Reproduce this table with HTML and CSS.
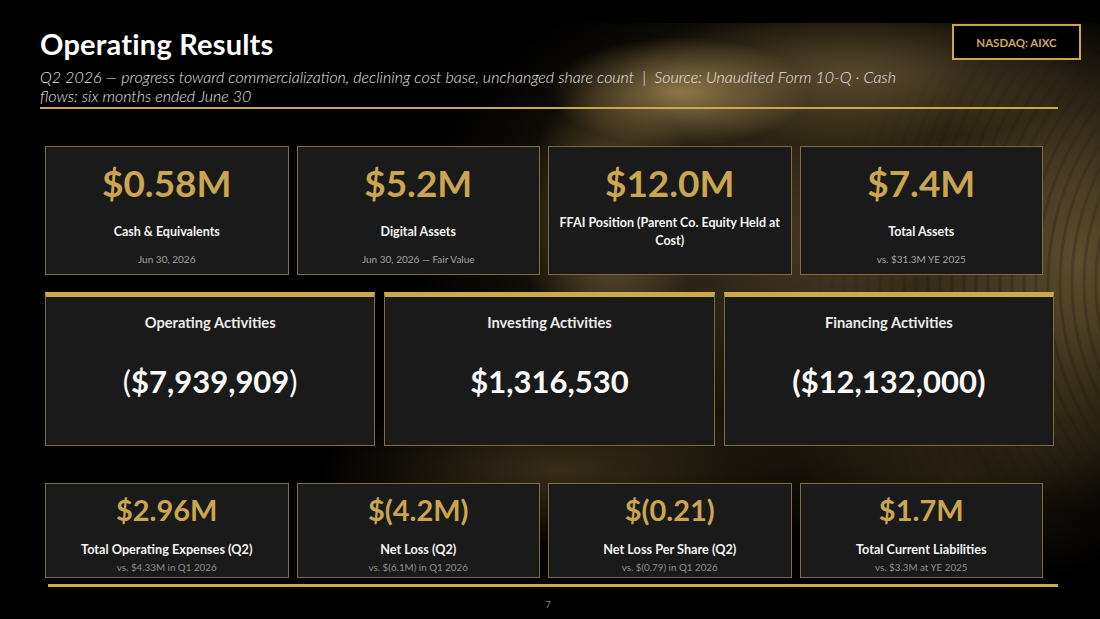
FILE: index.html
```html
<!DOCTYPE html>
<html lang="en">
<head>
<meta charset="utf-8">
<title>Operating Results</title>
<link rel="stylesheet" href="styles.css">
</head>
<body>
<div class="slide">
  <header class="header">
    <div class="heading">
      <h1 class="title">Operating Results</h1>
      <p class="subtitle">Q2 2026 — progress toward commercialization, declining cost base, unchanged share count &nbsp;|&nbsp; Source: Unaudited Form 10-Q · Cash flows: six months ended June 30</p>
    </div>
    <div class="badge">NASDAQ: AIXC</div>
  </header>
  <div class="rule rule-top"></div>

  <section class="row row-kpi">
    <div class="card kpi">
      <div class="kpi-value">$0.58M</div>
      <div class="kpi-label">Cash &amp; Equivalents</div>
      <div class="kpi-sub">Jun 30, 2026</div>
    </div>
    <div class="card kpi">
      <div class="kpi-value">$5.2M</div>
      <div class="kpi-label">Digital Assets</div>
      <div class="kpi-sub">Jun 30, 2026 — Fair Value</div>
    </div>
    <div class="card kpi">
      <div class="kpi-value">$12.0M</div>
      <div class="kpi-label">FFAI Position (Parent Co. Equity Held at Cost)</div>
      <div class="kpi-sub"></div>
    </div>
    <div class="card kpi">
      <div class="kpi-value">$7.4M</div>
      <div class="kpi-label">Total Assets</div>
      <div class="kpi-sub">vs. $31.3M YE 2025</div>
    </div>
  </section>

  <section class="row row-flow">
    <div class="card flow">
      <div class="flow-label">Operating Activities</div>
      <div class="flow-value"><span class="thin">(</span>$7,939,909<span class="thin">)</span></div>
    </div>
    <div class="card flow">
      <div class="flow-label">Investing Activities</div>
      <div class="flow-value">$1,316,530</div>
    </div>
    <div class="card flow">
      <div class="flow-label">Financing Activities</div>
      <div class="flow-value">($12,132,000)</div>
    </div>
  </section>

  <section class="row row-pl">
    <div class="card pl">
      <div class="pl-value">$2.96M</div>
      <div class="pl-label">Total Operating Expenses (Q2)</div>
      <div class="pl-sub">vs. $4.33M in Q1 2026</div>
    </div>
    <div class="card pl">
      <div class="pl-value">$(4.2M)</div>
      <div class="pl-label">Net Loss (Q2)</div>
      <div class="pl-sub">vs. $(6.1M) in Q1 2026</div>
    </div>
    <div class="card pl">
      <div class="pl-value">$(0.21)</div>
      <div class="pl-label">Net Loss Per Share (Q2)</div>
      <div class="pl-sub">vs. $(0.79) in Q1 2026</div>
    </div>
    <div class="card pl">
      <div class="pl-value">$1.7M</div>
      <div class="pl-label">Total Current Liabilities</div>
      <div class="pl-sub">vs. $3.3M at YE 2025</div>
    </div>
  </section>

  <div class="rule rule-bottom"></div>
  <div class="page-num">7</div>
</div>
</body>
</html>
```

FILE: styles.css
```css
* { box-sizing: border-box; }

html, body {
  margin: 0;
  padding: 0;
  background: #000;
}

body {
  width: 1100px;
  height: 619px;
  overflow: hidden;
  font-family: "Lato", "Open Sans", sans-serif;
  color: #fff;
}

.slide {
  position: relative;
  isolation: isolate;
  width: 1100px;
  height: 619px;
  display: flex;
  flex-direction: column;
  background-color: #000;
  background-image:
    linear-gradient(#000, #000),
    radial-gradient(ellipse 130px 55px at 680px 92px, rgba(160, 134, 80, 0.85), rgba(160, 134, 80, 0) 100%),
    radial-gradient(ellipse 90px 140px at 610px 220px, rgba(130, 106, 60, 0.75), rgba(130, 106, 60, 0) 100%),
    radial-gradient(ellipse 230px 70px at 850px 75px, rgba(120, 100, 58, 0.65), rgba(120, 100, 58, 0) 100%),
    radial-gradient(ellipse 160px 250px at 1080px 260px, rgba(115, 95, 55, 0.75), rgba(115, 95, 55, 0) 100%),
    radial-gradient(ellipse 430px 290px at 840px 240px, rgba(78, 64, 36, 0.9), rgba(78, 64, 36, 0) 100%),
    radial-gradient(ellipse 240px 80px at 560px 470px, rgba(95, 76, 42, 0.6), rgba(95, 76, 42, 0) 100%),
    radial-gradient(ellipse 220px 120px at 960px 470px, rgba(60, 48, 26, 0.55), rgba(60, 48, 26, 0) 100%);
  background-size: 100% 23px, auto, auto, auto, auto, auto, auto, auto;
  background-repeat: no-repeat;
}

/* decorative coin ridges of the background photo */
.slide::before {
  content: "";
  position: absolute;
  left: 560px;
  top: 23px;
  width: 540px;
  height: 500px;
  z-index: -1;
  background: repeating-radial-gradient(circle at 760px 260px, rgba(0, 0, 0, 0) 0 6px, rgba(0, 0, 0, 0.18) 7px 9px, rgba(0, 0, 0, 0) 10px 12px);
  -webkit-mask-image: radial-gradient(ellipse 240px 240px at 480px 250px, #000 20%, transparent 100%);
  mask-image: radial-gradient(ellipse 240px 240px at 480px 250px, #000 20%, transparent 100%);
}

/* Header */
.header {
  display: flex;
  justify-content: space-between;
  align-items: flex-start;
  padding: 24px 19px 0 40px;
}

.heading {
  display: flex;
  flex-direction: column;
}

.title {
  margin: 4px 0 0 0;
  font-size: 29px;
  line-height: 32px;
  font-weight: 700;
  color: #fff;
  letter-spacing: 0.2px;
}

.subtitle {
  margin: 7px 0 0 0;
  width: 880px;
  font-size: 16px;
  line-height: 19px;
  font-style: italic;
  font-weight: 300;
  color: #e4e4e4;
}

.badge {
  width: 129px;
  height: 36px;
  border: 2px solid #c9a84f;
  background: #000;
  color: #c9a862;
  font-size: 11.5px;
  font-weight: 700;
  display: flex;
  align-items: center;
  justify-content: center;
}

.rule {
  background: #c9a84f;
}

.rule-top {
  margin-top: 2px;
  margin-left: 40px;
  width: 1018px;
  height: 2px;
}

.rule-bottom {
  margin-top: 6px;
  margin-left: 48px;
  width: 1010px;
  height: 3px;
}

.page-num {
  margin-top: 12px;
  text-align: center;
  font-size: 9px;
  line-height: 12px;
  color: #8a8a8a;
  padding-right: 4px;
}

/* Rows */
.row {
  display: grid;
  margin-left: 45px;
}

.card {
  background: #1a1a1a;
  border: 1px solid #806c43;
  text-align: center;
}

/* Row 1: balance KPIs */
.row-kpi {
  margin-top: 37px;
  width: 998px;
  grid-template-columns: repeat(4, 1fr);
  gap: 8px;
}

.kpi {
  height: 129px;
  padding: 16px 8px 0;
  display: flex;
  flex-direction: column;
}

.kpi-value {
  font-size: 37px;
  line-height: 40px;
  font-weight: 700;
  color: #c9a64f;
}

.kpi-label {
  margin-top: 9px;
  height: 40px;
  display: flex;
  align-items: center;
  justify-content: center;
  font-size: 12.5px;
  line-height: 18px;
  font-weight: 700;
  color: #f4f4f4;
}

.kpi-sub {
  height: 14px;
  font-size: 10px;
  line-height: 14px;
  color: #a3a3a3;
}

/* Row 2: cash flows */
.row-flow {
  margin-top: 17px;
  width: 1009px;
  grid-template-columns: repeat(3, 1fr);
  gap: 9px;
}

.flow {
  height: 154px;
  border-top: 5px solid #c9a84f;
  padding-top: 15px;
}

.flow-label {
  font-size: 14.7px;
  line-height: 20px;
  font-weight: 700;
  color: #ececec;
}

.flow-value {
  margin-top: 29px;
  font-size: 31px;
  line-height: 40px;
  font-weight: 700;
  color: #fafafa;
}

.thin {
  font-weight: 400;
}

/* Row 3: P&L KPIs */
.row-pl {
  margin-top: 37px;
  width: 998px;
  grid-template-columns: repeat(4, 1fr);
  gap: 8px;
}

.pl {
  height: 95px;
  padding-top: 10px;
}

.pl-value {
  font-size: 29px;
  line-height: 32px;
  font-weight: 700;
  color: #c9a64f;
}

.pl-label {
  margin-top: 15px;
  font-size: 12.7px;
  line-height: 16px;
  font-weight: 700;
  color: #f4f4f4;
}

.pl-sub {
  margin-top: 3px;
  font-size: 9.8px;
  line-height: 14px;
  color: #8f8f8f;
}
```
